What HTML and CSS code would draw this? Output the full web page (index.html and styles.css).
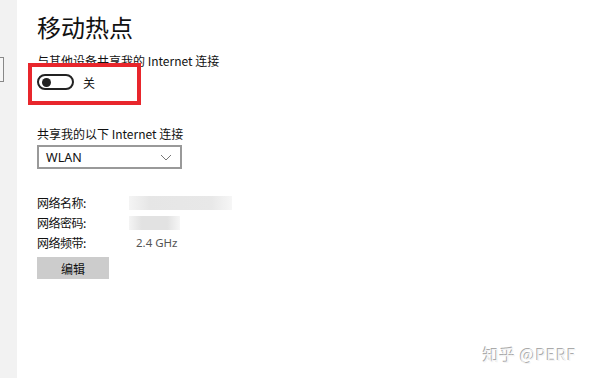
FILE: index.html
```html
<!DOCTYPE html>
<html>
<head>
<meta charset="utf-8">
<link rel="stylesheet" href="styles.css">
</head>
<body>
<div class="app">
  <div class="side"><div class="side-icon"></div></div>
  <div class="main">
    <h1 class="title">移动热点</h1>
    <div class="label">与其他设备共享我的 Internet 连接</div>
    <div class="toggle-row">
      <span class="toggle"><span class="knob"></span></span>
      <span class="toggle-text">关</span>
    </div>
    <div class="label label2">共享我的以下 Internet 连接</div>
    <div class="select">
      <span>WLAN</span>
      <svg class="chev" width="12" height="7" viewBox="0 0 12 7"><path d="M1 1 L6 6 L11 1" fill="none" stroke="#777" stroke-width="1"/></svg>
    </div>
    <div class="info">
      <div class="info-row"><span class="k">网络名称:</span><span class="blur b1"></span></div>
      <div class="info-row"><span class="k">网络密码:</span><span class="blur b2"></span></div>
      <div class="info-row"><span class="k">网络频带:</span><span class="v">2.4 GHz</span></div>
    </div>
    <div class="btn">编辑</div>
  </div>
  <div class="highlight"></div>
  <div class="watermark">知乎 @PERF</div>
</div>
</body>
</html>
```
FILE: styles.css
```css
html, body { margin: 0; padding: 0; }
body {
  width: 600px; height: 378px; overflow: hidden; background: #fff;
  font-family: "Noto Sans CJK SC", "Noto Sans", sans-serif; color: #111;
}
.app { display: flex; height: 378px; position: relative; }
.side { width: 17px; background: #f2f2f2; position: relative; }
.side-icon {
  position: absolute; left: -2px; top: 57px; width: 4px; height: 23px;
  border: 1px solid #888; background: #f6f6f6;
}
.main { padding-left: 20px; padding-top: 10px; display: flex; flex-direction: column; }
.title { margin: 0; font-size: 24px; font-weight: 400; line-height: 34px; color: #111; }
.label { font-size: 12px; line-height: 16px; margin-top: 9px; color: #111; }
.label2 { margin-top: 35px; }
.toggle-row { display: flex; align-items: center; margin-top: 4px; height: 18px; }
.toggle {
  width: 30px; height: 12px; border: 2px solid #222; border-radius: 9px;
  display: flex; align-items: center; padding-left: 3px; box-sizing: content-box;
}
.knob { width: 9px; height: 9px; border-radius: 50%; background: #222; }
.toggle-text { font-size: 12px; margin-left: 9px; }
.select {
  margin-top: 3px; height: 20px; border: 2px solid #999;
  display: flex; align-items: center; justify-content: space-between;
  padding: 0 8px 0 7px; box-sizing: content-box; width: 126px;
}
.select span { font-family: "Noto Sans", sans-serif; font-size: 12.5px; }
.info { margin-top: 25px; display: flex; flex-direction: column; gap: 3px; }
.info-row { display: flex; align-items: center; height: 17px; font-size: 12px; }
.k { width: 99px; letter-spacing: -0.5px; }
.v { color: #555; font-family: "Noto Sans", sans-serif; font-size: 11.5px; }
.blur { display: block; height: 14px; margin-left: -7px; }
.b1 { width: 103px; background: linear-gradient(90deg, #f4f4f4, #e6e6e6 20%, #e8e8e8 80%, #f6f6f6); }
.b2 { width: 51px; background: linear-gradient(90deg, #f4f4f4, #e2e2e2 25%, #e2e2e2 75%, #f6f6f6); }
.btn {
  margin-top: 6px; width: 72px; height: 22px; background: #cccccc;
  display: flex; align-items: center; justify-content: center; font-size: 12px;
}
.highlight {
  position: absolute; left: 28px; top: 63px; width: 105px; height: 34px;
  border: 4px solid #e8262c;
}
.watermark {
  position: absolute; left: 483px; top: 342px; font-size: 16px; color: #f4f4f4;
  text-shadow: -1px -1px 0 #aaa, 1px 1px 0 #fff; letter-spacing: 0.5px;
}
```
